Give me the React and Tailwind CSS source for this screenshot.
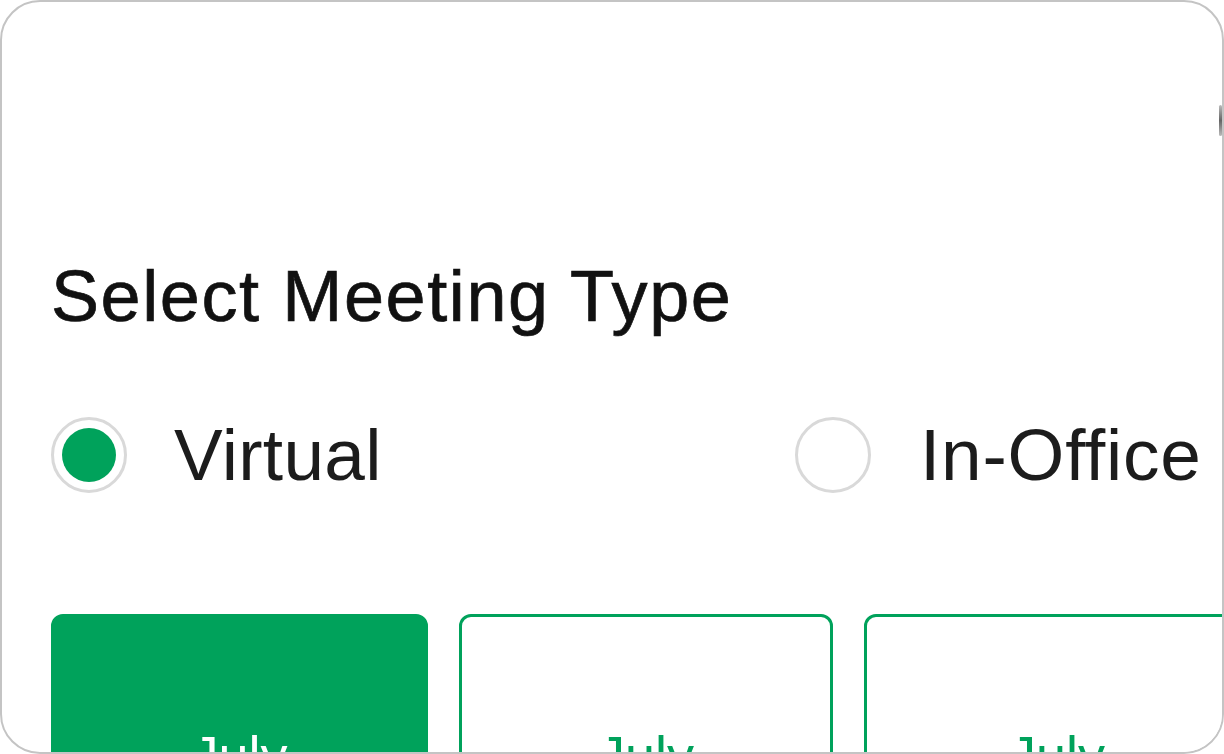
export default function App() {
  const font = { fontFamily: '"Liberation Sans", Arial, sans-serif' };
  return (
    <div className="w-[1224px] h-[754px] bg-white" style={font}>
      <div className="relative w-full h-full border-2 border-[#c4c4c4] rounded-[40px] overflow-hidden bg-white">
        <div className="absolute right-0 top-[103px] w-[3px] h-[31px] rounded-sm bg-gradient-to-b from-[#bbbbbb] via-[#666666] to-[#bbbbbb]" />
        <div className="pl-[49px] pt-[258px]">
          <h1 className="h-[72px] text-[72px] leading-[72px] font-normal tracking-[1.6px] text-[#111111] whitespace-nowrap [-webkit-text-stroke:0.7px_#111111]">
            Select Meeting Type
          </h1>
          <div className="mt-[85px] flex h-[76px] items-center">
            <div className="flex w-[744px] shrink-0 items-center">
              <span className="flex h-[76px] w-[76px] shrink-0 items-center justify-center rounded-full border-[3px] border-[#d9d9d9]">
                <span className="h-[54px] w-[54px] rounded-full bg-[#00a25b]" />
              </span>
              <span className="ml-[47px] text-[73px] leading-[72px] tracking-[0.3px] text-[#1c1c1c] whitespace-nowrap">Virtual</span>
            </div>
            <div className="flex shrink-0 items-center">
              <span className="h-[76px] w-[76px] shrink-0 rounded-full border-[3px] border-[#d9d9d9]" />
              <span className="ml-[49px] text-[73px] leading-[72px] tracking-[0.8px] text-[#1c1c1c] whitespace-nowrap">In-Office</span>
            </div>
          </div>
          <div className="mt-[121px] flex gap-[31px]">
            <div className="h-[220px] w-[377px] shrink-0 rounded-[12px] border-[3px] border-[#00a25b] bg-[#00a25b] pt-[111px] text-center">
              <div className="text-[54px] leading-[54px] text-white">July</div>
            </div>
            <div className="h-[220px] w-[374px] shrink-0 rounded-[12px] border-[3px] border-[#00a25b] bg-white pt-[111px] text-center">
              <div className="text-[54px] leading-[54px] text-[#00a25b]">July</div>
            </div>
            <div className="h-[220px] w-[386px] shrink-0 rounded-[12px] border-[3px] border-[#00a25b] bg-white pt-[111px] text-center">
              <div className="text-[54px] leading-[54px] text-[#00a25b]">July</div>
            </div>
          </div>
        </div>
      </div>
    </div>
  );
}
